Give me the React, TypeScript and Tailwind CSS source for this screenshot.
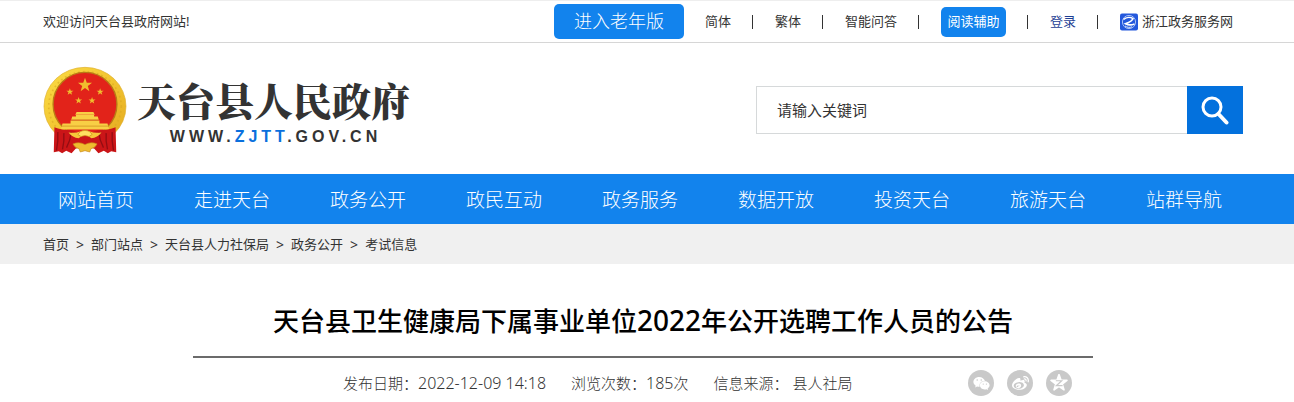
import { FaWeixin, FaWeibo } from 'react-icons/fa6';

const navItems = ['网站首页', '走进天台', '政务公开', '政民互动', '政务服务', '数据开放', '投资天台', '旅游天台', '站群导航'];
const crumbs = ['首页', '部门站点', '天台县人力社保局', '政务公开', '考试信息'];

const STAR = '0,-10 2.4,-3.2 9.5,-3.1 3.8,1.2 5.9,8.1 0,4 -5.9,8.1 -3.8,1.2 -9.5,-3.1 -2.4,-3.2';

function Emblem() {
  return (
    <svg viewBox="8 8 250 262" className="h-[88px] w-[84px] shrink-0" role="img" aria-label="国徽">
      <defs>
        <linearGradient id="gold" x1="0" y1="0" x2="1" y2="1">
          <stop offset="0" stopColor="#fbdc45" />
          <stop offset="0.5" stopColor="#f2c530" />
          <stop offset="1" stopColor="#e3a81f" />
        </linearGradient>
      </defs>
      <ellipse cx="133" cy="128" rx="122" ry="116" fill="url(#gold)" stroke="#e0b02c" strokeWidth="2" />
      <ellipse cx="133" cy="128" rx="108" ry="103" fill="none" stroke="#dba722" strokeWidth="5" strokeDasharray="5 9" opacity="0.6" />
      <circle cx="133" cy="122" r="95" fill="#e2231a" stroke="#b97a15" strokeWidth="4" />
      <g fill="#f0bd2e">
        <polygon points={STAR} transform="translate(133 65) scale(2.2)" />
        <polygon points={STAR} transform="translate(88 85) scale(1.1)" />
        <polygon points={STAR} transform="translate(178 85) scale(1.1)" />
        <polygon points={STAR} transform="translate(114 111) scale(1.1)" />
        <polygon points={STAR} transform="translate(154 111) scale(1.1)" />
      </g>
      <path d="M108 145h50l4 8h-58zM106 154h54v4h11l3 10H92l3-10h11zM90 170h86v9h24l5 18H61l5-18h24z" fill="#f8cf45" />
      <path d="M92 169h82M62 187h142" stroke="#c98a1c" strokeWidth="2" />
      {/* Ribbons */}
      <path d="M42 190q20 9 52 9 14 2 22 12h34q8-10 22-12 32 0 52-9l2 75-15-3-10 6-12-8-16 8-12-14-28-9-28 9-12 14-16-8-12 8-10-6-15 3z" fill="#cb1518" />
      <path d="M52 205q2 28-4 55M70 208q2 25-4 48M92 206q-2 22-14 45M214 205q-2 28 4 55M196 208q-2 25 4 48M174 206q2 22 14 45" fill="none" stroke="#930d12" strokeWidth="4" />
      {/* Gear and wheat stems */}
      <path d="M84 206q22 2 32-2 17-9 34 0 10 4 32 2-12 16-30 17-8-8-19-8t-19 8q-18-1-30-17z" fill="#f6c739" />
      <path d="M112 212q6-12 21-12t21 12l-9 6q-12-6-24 0z" fill="#ffdf62" stroke="#c88718" strokeWidth="2" />
      <path d="M97 240q18-8 36 2 18-10 36-2-6 12-18 14l-4 10-14-4-14 4-4-10q-12-2-18-14z" fill="#efbd30" stroke="#c88718" strokeWidth="2" />
    </svg>
  );
}

function Divider() {
  return <span className="h-[14px] w-0.5 border-l border-[#333]" />;
}

function ServiceIcon() {
  return (
    <svg viewBox="0 0 18 18" className="h-[18px] w-[18px]" aria-hidden="true">
      <rect width="18" height="17" y="0.5" rx="2" fill="#2458dc" />
      <circle cx="9" cy="9" r="6.6" fill="none" stroke="#a9c1f5" />
      <path d="M3.5 6.5c3-2.5 7-2.5 9.5-.8-1 2.500-4 3.600-7.500 5 3 1.500 6.500 1.300 9 .2" fill="none" stroke="#fff" strokeWidth="1.6" />
      <path d="M5 13c2 1.500 5 1.800 7 .8" fill="none" stroke="#dfe9ff" />
    </svg>
  );
}

export default function App() {
  return (
    <div className="bg-white font-['Noto_Sans','Noto_Sans_CJK_SC',sans-serif] text-[13px] text-[#333]">
      {/* Top bar */}
      <div className="flex h-[43px] items-center justify-between border-t border-b border-t-[#eee] border-b-[#d6d6d6] pr-[61px] pl-[43px]">
        <span>欢迎访问天台县政府网站!</span>
        <div className="flex items-center gap-[21px]">
          <button className="h-[35px] w-[130px] rounded-[5px] bg-[#1283ed] text-[18px] font-light text-white">进入老年版</button>
          <a href="#jian">简体</a>
          <Divider />
          <a href="#fan">繁体</a>
          <Divider />
          <a href="#qa">智能问答</a>
          <Divider />
          <button className="h-[30px] w-[65px] rounded-[5px] bg-[#1283ed] text-white">阅读辅助</button>
          <Divider />
          <a href="#login" className="text-[#1e3f94]">登录</a>
          <Divider />
          <a href="#service" className="flex items-center gap-1">
            <ServiceIcon />
            浙江政务服务网
          </a>
        </div>
      </div>

      {/* Logo and search */}
      <header className="flex h-[131px] items-center justify-between pt-0.5 pr-[51px] pl-[43px]">
        <a href="#home" className="flex items-center gap-[10px]">
          <Emblem />
          <span className="flex flex-col items-center pt-1">
            <span className="font-['Noto_Serif_CJK_SC','Noto_Sans_CJK_SC',serif] text-[39px] leading-[50px] font-black">天台县人民政府</span>
            <span className="pl-1 font-['Liberation_Sans',sans-serif] text-[16px] leading-[26px] font-bold tracking-[4px]">
              WWW.<span className="text-[#0a70dd]">ZJTT</span>.GOV.CN
            </span>
          </span>
        </a>
        <form className="flex h-12 w-[487px]">
          <input
            aria-label="请输入关键词"
            placeholder="请输入关键词"
            className="min-w-0 flex-1 border border-r-0 border-[#d6d9da] px-5 pt-0.5 text-[15px] outline-none placeholder:text-[#333]"
          />
          <button type="button" aria-label="搜索" className="flex w-14 items-center justify-center bg-[#0371dd]">
            <svg viewBox="0 0 28 30" className="h-[30px] w-7" fill="none" stroke="#fff" aria-hidden="true">
              <circle cx="11" cy="12" r="9" strokeWidth="3" />
              <path d="M17.500 19l8 8.500" strokeWidth="4" strokeLinecap="round" />
            </svg>
          </button>
        </form>
      </header>

      <nav className="flex h-[50px] items-center bg-[#1283ed] pt-0.5 pr-[42px] pl-7">
        {navItems.map((item) => (
          <a key={item} href="#nav" className="flex-1 text-center text-[19px] font-light text-white">{item}</a>
        ))}
      </nav>

      {/* Breadcrumb */}
      <div className="flex h-10 items-center gap-[7px] bg-[#f0f0f0] pt-0.5 pl-[43px]">
        {crumbs.map((item, i) => (
          <span key={item} className="flex items-center gap-[7px]">
            {i > 0 && <span className="text-[14px] leading-5">&gt;</span>}
            <a href="#crumb">{item}</a>
          </span>
        ))}
      </div>

      <main className="pr-[51px] pl-[43px]">
        <article className="mx-auto max-w-[900px]">
          <h1 className="border-b-2 border-[#6b6b6b] pt-[37px] pb-[15px] text-center text-[26px] leading-[40px] font-medium text-black">
            天台县卫生健康局下属事业单位<span className="text-[28px] leading-none">2022</span>年公开选聘工作人员的公告
          </h1>
          <div className="flex items-center justify-between pt-3 pr-[21px] pl-[150px] text-[15px] font-light">
            <div className="flex gap-[25px]">
              <span>发布日期：<span className="text-[16px] leading-none">2022-12-09 14:18</span></span>
              <span>浏览次数：<span className="text-[16px] leading-none">185</span>次</span>
              <span>信息来源： 县人社局</span>
            </div>
            <div className="flex gap-[13px]">
              <button aria-label="微信" className="flex size-[26px] items-center justify-center rounded-full bg-[#c9c9c9] text-white">
                <FaWeixin size={17} />
              </button>
              <button aria-label="微博" className="flex size-[26px] items-center justify-center rounded-full bg-[#c9c9c9] text-white">
                <FaWeibo size={17} />
              </button>
              <button aria-label="QQ空间" className="flex size-[26px] items-center justify-center rounded-full bg-[#c9c9c9] text-white">
                <svg viewBox="-10 -10 20 20" className="size-[18px]" aria-hidden="true">
                  <polygon points={STAR} fill="#fff" stroke="#fff" strokeWidth="2" strokeLinejoin="round" transform="scale(.93)" />
                  <path d="M-3.500-2.500h6.500l-6 5.500h7" fill="none" stroke="#c9c9c9" strokeWidth="1.300" />
                </svg>
              </button>
            </div>
          </div>
        </article>
      </main>
    </div>
  );
}
